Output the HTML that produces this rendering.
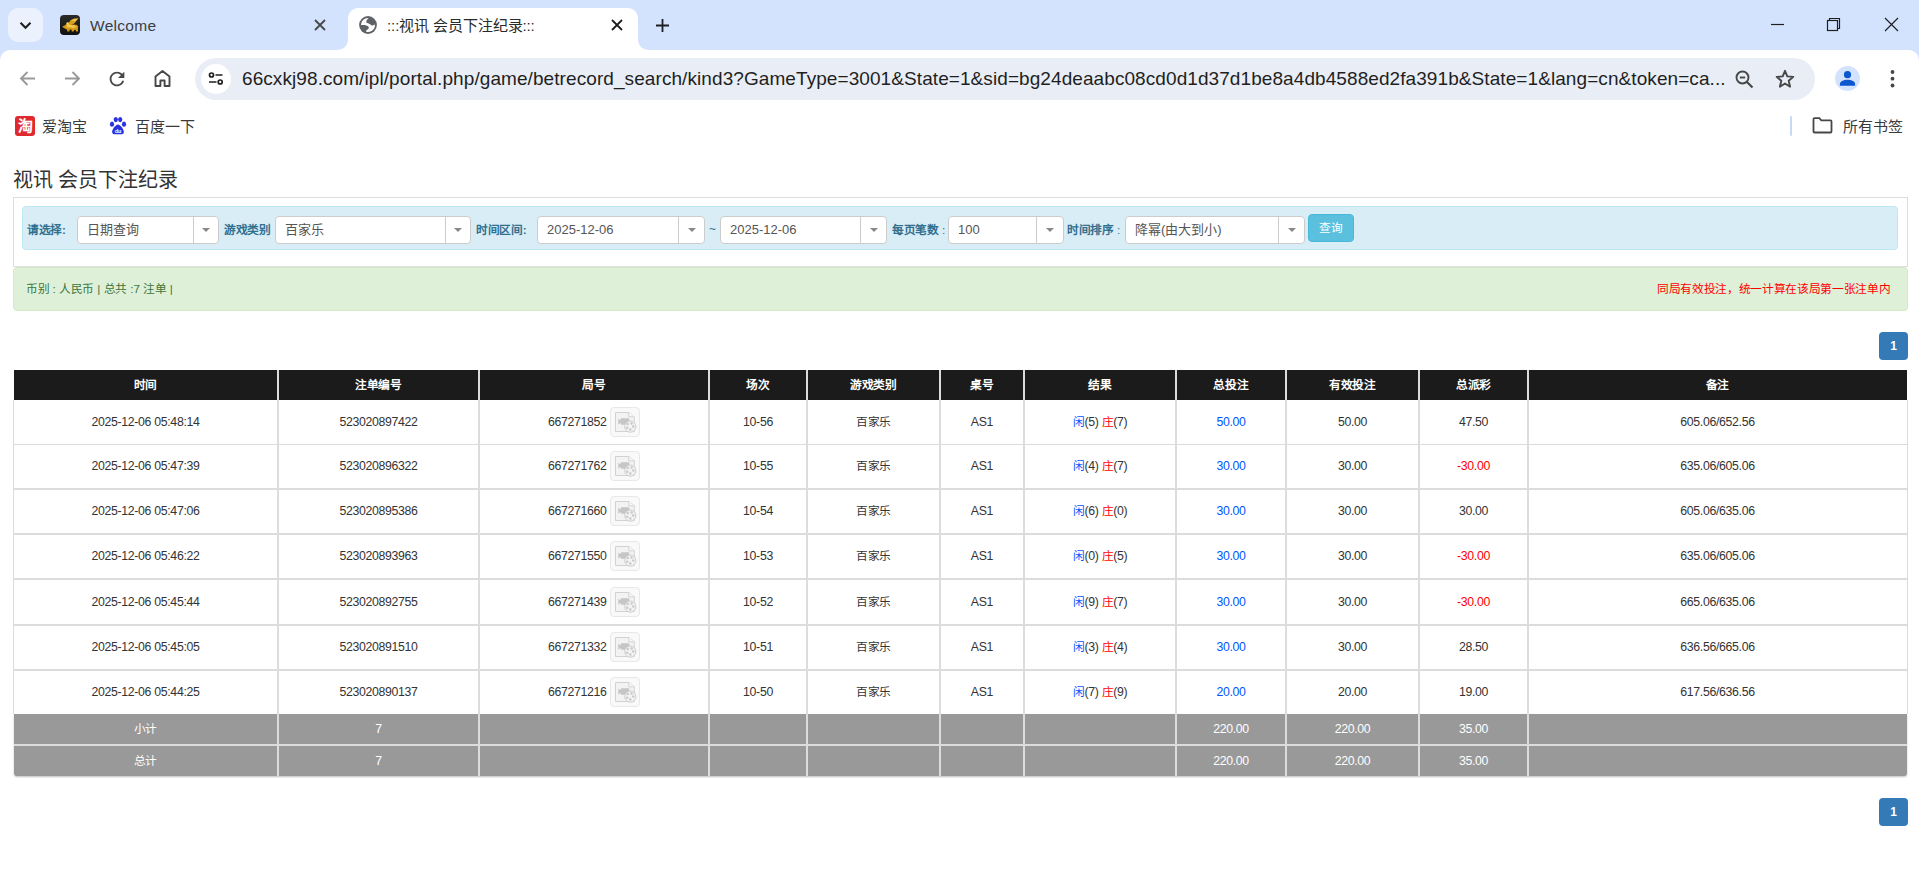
<!DOCTYPE html><html lang="zh-CN"><head><meta charset="utf-8"><title>视讯 会员下注纪录</title><style>
*{margin:0;padding:0;box-sizing:border-box}
html,body{width:1919px;height:888px;overflow:hidden;background:#fff}
body{position:relative;font-family:"Liberation Sans",sans-serif;color:#333}
.a{position:absolute}
.c{display:flex;align-items:center;justify-content:center;white-space:nowrap}
.tabbar{left:0;top:0;width:1919px;height:62px;background:#d3e3fd}
.toolbar{left:0;top:50px;width:1919px;height:95px;background:#fff;border-radius:10px 10px 0 0}
.omni{left:195px;top:58px;width:1620px;height:42px;background:#e9eef6;border-radius:21px}
.url{left:242px;top:66px;font-size:19px;letter-spacing:0.08px;color:#1f1f1f;white-space:nowrap;line-height:26px}
.bm{font-size:15px;color:#3a3a3a;white-space:nowrap;line-height:20px;margin-top:1px}
.title{left:12.5px;top:167px;font-size:20px;color:#333;line-height:26px;white-space:nowrap}
.panel{left:13px;top:197px;width:1895px;height:70px;border:1px solid #ddd;border-bottom-color:#ddd}
.info{left:22px;top:206px;width:1876px;height:44px;background:#d9edf7;border:1px solid #bce8f1;border-radius:4px}
.lbl{font-size:11.7px;font-weight:bold;color:#31708f;line-height:16px;white-space:nowrap;top:221.5px}
.sel{top:216px;height:28px;background:#fff;border:1px solid #ccc;border-radius:4px}
.sel .t{position:absolute;left:9px;top:3.5px;font-size:13px;color:#555;line-height:17px;white-space:nowrap}
.sel .d{position:absolute;top:0;bottom:0;width:1px;background:#ccc}
.sel .ar{position:absolute;top:11px;width:0;height:0;border-left:4px solid transparent;border-right:4px solid transparent;border-top:4px solid #888}
.btn{left:1308px;top:214px;width:46px;height:28px;background:#5bc0de;border:1px solid #46b8da;border-radius:4px;color:#fff;font-size:11.7px;padding-bottom:3px;letter-spacing:-0.33px}
.succ{left:13px;top:267px;width:1895px;height:44px;background:#dff0d8;border:1px solid #d6e9c6;border-radius:4px}
.st{font-size:11.7px;line-height:16px;white-space:nowrap;top:280.5px}
.pg{left:1879px;width:29px;height:28px;background:#337ab7;border-radius:4px;color:#fff;font-size:12px;font-weight:bold}
.tc{font-size:12.3px;line-height:16px;letter-spacing:-0.32px}
.hd{color:#fff;font-weight:bold}.hd2{color:#fff}
.blue{color:#0055ff}
.red{color:#ff0000}
.k{letter-spacing:-0.33px}
.tc .k{letter-spacing:-0.33px;font-size:11.7px}
.ic{width:30px;height:30px;border:1px solid #e8e8e8;border-radius:4px;background:#f9f9f9;margin-left:3.5px;position:relative;top:0px}
</style></head><body>
<div class="a tabbar"></div>
<div class="a" style="left:8px;top:8px;width:35px;height:34px;background:#ebf1fd;border-radius:10px"></div>
<svg class="a" style="left:17px;top:17px" width="17" height="17" viewBox="0 0 17 17"><path d="M3.5 5.8 L8.5 10.8 L13.5 5.8" fill="none" stroke="#1f1f1f" stroke-width="2"/></svg>
<div class="a" style="left:60px;top:15px;width:20px;height:20px;background:linear-gradient(#2a2a2a,#111);border-radius:4px;overflow:hidden"><svg width="20" height="20" viewBox="0 0 20 20"><path d="M8.5 8.2L10.5 5.2L14 3.6L18.6 3.2L16.8 5.2L15.2 7.6L13.2 9.2L10.2 9.4Z" fill="#d9a21e"/><path d="M11 5.5L14.5 4.2L17.5 3.8L15.5 5.8Z" fill="#f4cf5e"/><path d="M2.6 11.2L5.2 10.2L6.6 8.2L8.6 7.6L9.8 8.6L12.6 9.4L16.6 9.8L18.2 11.6L17.8 14.2L18 16.4L16.2 16.4L15.6 14.8L14.2 15L13.6 16.6L11.8 16.6L11.6 14.8L9.8 14.6L9.2 16.6L7.4 16.6L7 14.4L5 13.8L4 12.8L2.8 12.6Z" fill="#d49a1a"/><path d="M6.2 10.4L8.4 9L11 10L14.8 10.6L16.4 12L13.8 13L10.6 12.6L7.6 12.4Z" fill="#f2c94c"/><circle cx="7.6" cy="8.4" r="1.1" fill="#f7d86a"/></svg></div>
<div class="a" style="left:90px;top:15.5px;font-size:15.5px;letter-spacing:0.3px;color:#3c3c3c;line-height:20px;white-space:nowrap">Welcome</div>
<svg class="a" style="left:313px;top:18px" width="14" height="14" viewBox="0 0 14 14"><path d="M2 2L12 12M12 2L2 12" stroke="#474747" stroke-width="1.8"/></svg>
<div class="a" style="left:348px;top:8px;width:290px;height:42px;background:#fff;border-radius:10px 10px 0 0"></div>
<svg class="a" style="left:336px;top:38px" width="12" height="12" viewBox="0 0 12 12"><path d="M0 12 Q12 12 12 0 L12 12 Z" fill="#fff"/></svg>
<svg class="a" style="left:638px;top:38px" width="12" height="12" viewBox="0 0 12 12"><path d="M12 12 Q0 12 0 0 L0 12 Z" fill="#fff"/></svg>
<svg class="a" style="left:359px;top:16px" width="18" height="18" viewBox="0 0 18 18"><circle cx="9" cy="9" r="8.9" fill="#5f6368"/><path d="M9.7 1.95C8.2 3.2 7.0 4.8 7.3 6.6C8.6 7.4 10.6 7.6 12 8.9C13.2 9.9 15 9.3 16.1 8.6A7.1 7.1 0 0 1 7.6 15.95C6.6 14.6 7.4 13.8 8.6 13.4C9.9 12.9 10.2 11.3 9.3 10.6C8.4 9.6 6.8 9.1 5.2 9.0L1.95 8.9A7.1 7.1 0 0 1 9.7 1.95Z" fill="#fff"/></svg>
<div class="a" style="left:387px;top:16px;font-size:15px;color:#2a2a2a;line-height:20px;white-space:nowrap;letter-spacing:-0.1px">:::视讯 会员下注纪录:::</div>
<svg class="a" style="left:610px;top:18px" width="14" height="14" viewBox="0 0 14 14"><path d="M2 2L12 12M12 2L2 12" stroke="#1f1f1f" stroke-width="1.8"/></svg>
<svg class="a" style="left:655px;top:18px" width="15" height="15" viewBox="0 0 15 15"><path d="M7.5 1V14M1 7.5H14" stroke="#1f1f1f" stroke-width="1.8"/></svg>
<svg class="a" style="left:1765px;top:12px" width="26" height="26" viewBox="0 0 26 26"><path d="M6 12.5H19" stroke="#1f1f1f" stroke-width="1.2"/></svg>
<svg class="a" style="left:1821px;top:12px" width="26" height="26" viewBox="0 0 26 26"><rect x="6.5" y="8.5" width="10" height="10" fill="none" stroke="#1f1f1f" stroke-width="1.2"/><path d="M8.5 8.5V6.5H18.5V16.5H16.5" fill="none" stroke="#1f1f1f" stroke-width="1.2"/></svg>
<svg class="a" style="left:1878px;top:12px" width="26" height="26" viewBox="0 0 26 26"><path d="M7 6L20 19M20 6L7 19" stroke="#1f1f1f" stroke-width="1.2"/></svg>
<div class="a toolbar"></div>
<svg class="a" style="left:17px;top:68px" width="21" height="21" viewBox="0 0 21 21"><path d="M18 10.5H4.5M10.5 4L4 10.5L10.5 17" fill="none" stroke="#9a9a9a" stroke-width="1.9"/></svg>
<svg class="a" style="left:62px;top:68px" width="21" height="21" viewBox="0 0 21 21"><path d="M3 10.5H16.5M10.5 4L17 10.5L10.5 17" fill="none" stroke="#9a9a9a" stroke-width="1.9"/></svg>
<svg class="a" style="left:106.3px;top:67.6px" width="22" height="22" viewBox="0 0 24 24"><path d="M17.65 6.35C16.2 4.9 14.21 4 12 4c-4.42 0-7.99 3.58-7.99 8s3.57 8 7.99 8c3.73 0 6.84-2.55 7.73-6h-2.08c-.82 2.33-3.04 4-5.65 4-3.31 0-6-2.690-6-6s2.69-6 6-6c1.66 0 3.14.69 4.220 1.78L13 11h7V4l-2.35 2.35z" fill="#474747"/></svg>
<svg class="a" style="left:152px;top:68px" width="21" height="21" viewBox="0 0 21 21"><path d="M3.5 18V8.6L10.5 3L17.5 8.6V18H12.6V12.5H8.4V18Z" fill="none" stroke="#474747" stroke-width="1.9" stroke-linejoin="round"/></svg>
<div class="a omni"></div>
<div class="a" style="left:201px;top:64px;width:30px;height:30px;border-radius:15px;background:#fff"></div>
<svg class="a" style="left:206px;top:69px" width="20" height="20" viewBox="0 0 20 20"><circle cx="5.5" cy="6" r="2" fill="none" stroke="#1f1f1f" stroke-width="1.7"/><path d="M9.5 6H16.5M3 13H10.5" stroke="#1f1f1f" stroke-width="1.7"/><circle cx="14.2" cy="13" r="2" fill="none" stroke="#1f1f1f" stroke-width="1.7"/></svg>
<div class="a url">66cxkj98.com/ipl/portal.php/game/betrecord_search/kind3?GameType=3001&amp;State=1&amp;sid=bg24deaabc08cd0d1d37d1be8a4db4588ed2fa391b&amp;State=1&amp;lang=cn&amp;token=ca...</div>
<svg class="a" style="left:1734px;top:69px" width="22" height="22" viewBox="0 0 22 22"><circle cx="8.5" cy="8.5" r="6" fill="none" stroke="#474747" stroke-width="1.9"/><path d="M5.8 8.5H11.2" stroke="#474747" stroke-width="1.9"/><path d="M13 13L18.5 18.5" stroke="#474747" stroke-width="2.1"/></svg>
<svg class="a" style="left:1774px;top:68px" width="22" height="22" viewBox="0 0 22 22"><path d="M11 2.8L13.3 8.4L19.3 8.9L14.7 12.8L16.1 18.7L11 15.5L5.9 18.7L7.3 12.8L2.7 8.9L8.7 8.4Z" fill="none" stroke="#474747" stroke-width="1.9" stroke-linejoin="round"/></svg>
<div class="a" style="left:1835px;top:66px;width:25px;height:25px;border-radius:13px;background:#d3e3fd"></div>
<svg class="a" style="left:1835px;top:66px" width="25" height="25" viewBox="0 0 25 25"><circle cx="12.5" cy="8.7" r="3.6" fill="#0b57d0"/><path d="M4.9 19.8V18.2C4.9 15.4 8.4 13.8 12.5 13.8C16.6 13.8 20.1 15.4 20.1 18.2V19.8Z" fill="#0b57d0"/></svg>
<svg class="a" style="left:1886px;top:66px" width="13" height="26" viewBox="0 0 13 26"><circle cx="6.5" cy="6" r="1.9" fill="#474747"/><circle cx="6.5" cy="12.7" r="1.9" fill="#474747"/><circle cx="6.5" cy="19.5" r="1.9" fill="#474747"/></svg>
<div class="a" style="left:15px;top:116px;width:20px;height:20px;background:#e0282f;border-radius:3px;color:#fff;font-size:15px;font-weight:bold;line-height:20px;text-align:center">淘</div>
<div class="a bm" style="left:42px;top:116px">爱淘宝</div>
<svg class="a" style="left:109px;top:116px" width="18" height="20" viewBox="0 0 18 20"><ellipse cx="3" cy="8.2" rx="2.1" ry="2.6" fill="#2932e1"/><ellipse cx="6.8" cy="3.6" rx="2.1" ry="2.6" fill="#2932e1"/><ellipse cx="11.2" cy="3.6" rx="2.1" ry="2.6" fill="#2932e1"/><ellipse cx="15" cy="8.2" rx="2.1" ry="2.6" fill="#2932e1"/><path d="M9 8.5C11.5 8.5 15.5 14 14.8 16.6C14.2 19 11.4 18.2 9 18.2C6.6 18.2 3.8 19 3.2 16.6C2.5 14 6.5 8.5 9 8.5Z" fill="#2932e1"/><text x="9" y="17" font-size="5.5" fill="#fff" text-anchor="middle" font-family="Liberation Sans" font-weight="bold">du</text></svg>
<div class="a bm" style="left:135px;top:116px">百度一下</div>
<div class="a" style="left:1790px;top:116px;width:2px;height:20px;background:#c7d8f9;border-radius:1px"></div>
<svg class="a" style="left:1810px;top:115px" width="24" height="20" viewBox="0 0 24 20"><path d="M3.5 4.2C3.5 3.6 3.9 3.2 4.5 3.2H9.3L11.3 5.4H20.5C21.1 5.4 21.5 5.8 21.5 6.4V16.5C21.5 17.1 21.1 17.5 20.5 17.5H4.5C3.9 17.5 3.5 17.1 3.5 16.5Z" fill="none" stroke="#474747" stroke-width="1.8"/></svg>
<div class="a bm" style="left:1843px;top:116px">所有书签</div>
<div class="a title">视讯 会员下注纪录</div>
<div class="a panel"></div>
<div class="a info"></div>
<div class="a lbl" style="left:27px"><span class="k">请选择</span>:</div>
<div class="a sel" style="left:77px;width:142px"><span class="t">日期查询</span><span class="d" style="left:115px"></span><span class="ar" style="left:124px"></span></div>
<div class="a lbl" style="left:224px"><span class="k">游戏类别</span></div>
<div class="a sel" style="left:275px;width:196px"><span class="t">百家乐</span><span class="d" style="left:169px"></span><span class="ar" style="left:178px"></span></div>
<div class="a lbl" style="left:476px"><span class="k">时间区间</span>:</div>
<div class="a sel" style="left:537px;width:168px"><span class="t">2025-12-06</span><span class="d" style="left:140px"></span><span class="ar" style="left:150px"></span></div>
<div class="a" style="left:709px;top:221px;font-size:12px;line-height:16px;color:#31708f">~</div>
<div class="a sel" style="left:720px;width:167px"><span class="t">2025-12-06</span><span class="d" style="left:139px"></span><span class="ar" style="left:149px"></span></div>
<div class="a lbl" style="left:892px"><span class="k">每页笔数</span><span style="font-weight:normal"> :</span></div>
<div class="a sel" style="left:948px;width:116px"><span class="t">100</span><span class="d" style="left:87px"></span><span class="ar" style="left:97px"></span></div>
<div class="a lbl" style="left:1067px"><span class="k">时间排序</span><span style="font-weight:normal"> :</span></div>
<div class="a sel" style="left:1125px;width:180px"><span class="t">降幂(由大到小)</span><span class="d" style="left:152px"></span><span class="ar" style="left:162px"></span></div>
<div class="a btn c">查询</div>
<div class="a succ"></div>
<div class="a st" style="left:26px;color:#3c763d"><span class="k">币别</span> : <span class="k">人民币</span> | <span class="k">总共</span> :7 <span class="k">注单</span> |</div>
<div class="a st" style="left:1657px;color:#ff0000"><span class="k">同局有效投注，统一计算在该局第一张注单内</span></div>
<div class="a pg c" style="top:332px">1</div>
<div class="a pg c" style="top:798px">1</div>
<div class="a" style="left:14px;top:370px;width:1893px;height:30px;background:#1b1b1b"></div>
<div class="a" style="left:13px;top:400px;width:1895px;height:314px;background:#fff;border-left:1px solid #dcdcdc;border-right:1px solid #dcdcdc"></div>
<div class="a" style="left:13px;top:444px;width:1895px;height:1px;background:#dcdcdc"></div>
<div class="a" style="left:13px;top:488px;width:1895px;height:2px;background:#dcdcdc"></div>
<div class="a" style="left:13px;top:533px;width:1895px;height:2px;background:#dcdcdc"></div>
<div class="a" style="left:13px;top:578px;width:1895px;height:2px;background:#dcdcdc"></div>
<div class="a" style="left:13px;top:624px;width:1895px;height:2px;background:#dcdcdc"></div>
<div class="a" style="left:13px;top:669px;width:1895px;height:2px;background:#dcdcdc"></div>
<div class="a" style="left:14px;top:714px;width:1893px;height:62px;background:#999;border-radius:0 0 3px 3px;box-shadow:0 1px 2px rgba(0,0,0,.25)"></div>
<div class="a" style="left:14px;top:744px;width:1893px;height:2px;background:#dcdcdc"></div>
<div class="a" style="left:277px;top:370px;width:2px;height:406px;background:#dcdcdc"></div>
<div class="a" style="left:478px;top:370px;width:2px;height:406px;background:#dcdcdc"></div>
<div class="a" style="left:708px;top:370px;width:2px;height:406px;background:#dcdcdc"></div>
<div class="a" style="left:806px;top:370px;width:2px;height:406px;background:#dcdcdc"></div>
<div class="a" style="left:939px;top:370px;width:2px;height:406px;background:#dcdcdc"></div>
<div class="a" style="left:1023px;top:370px;width:2px;height:406px;background:#dcdcdc"></div>
<div class="a" style="left:1175px;top:370px;width:2px;height:406px;background:#dcdcdc"></div>
<div class="a" style="left:1285px;top:370px;width:2px;height:406px;background:#dcdcdc"></div>
<div class="a" style="left:1418px;top:370px;width:2px;height:406px;background:#dcdcdc"></div>
<div class="a" style="left:1527px;top:370px;width:2px;height:406px;background:#dcdcdc"></div>
<div class="a c tc hd" style="left:14px;top:370px;width:263px;height:29px"><span style="display:inline-flex;align-items:center;white-space:pre"><span class="k">时间</span></span></div>
<div class="a c tc hd" style="left:279px;top:370px;width:199px;height:29px"><span style="display:inline-flex;align-items:center;white-space:pre"><span class="k">注单编号</span></span></div>
<div class="a c tc hd" style="left:480px;top:370px;width:228px;height:29px"><span style="display:inline-flex;align-items:center;white-space:pre"><span class="k">局号</span></span></div>
<div class="a c tc hd" style="left:710px;top:370px;width:96px;height:29px"><span style="display:inline-flex;align-items:center;white-space:pre"><span class="k">场次</span></span></div>
<div class="a c tc hd" style="left:808px;top:370px;width:131px;height:29px"><span style="display:inline-flex;align-items:center;white-space:pre"><span class="k">游戏类别</span></span></div>
<div class="a c tc hd" style="left:941px;top:370px;width:82px;height:29px"><span style="display:inline-flex;align-items:center;white-space:pre"><span class="k">桌号</span></span></div>
<div class="a c tc hd" style="left:1025px;top:370px;width:150px;height:29px"><span style="display:inline-flex;align-items:center;white-space:pre"><span class="k">结果</span></span></div>
<div class="a c tc hd" style="left:1177px;top:370px;width:108px;height:29px"><span style="display:inline-flex;align-items:center;white-space:pre"><span class="k">总投注</span></span></div>
<div class="a c tc hd" style="left:1287px;top:370px;width:131px;height:29px"><span style="display:inline-flex;align-items:center;white-space:pre"><span class="k">有效投注</span></span></div>
<div class="a c tc hd" style="left:1420px;top:370px;width:107px;height:29px"><span style="display:inline-flex;align-items:center;white-space:pre"><span class="k">总派彩</span></span></div>
<div class="a c tc hd" style="left:1529px;top:370px;width:377px;height:29px"><span style="display:inline-flex;align-items:center;white-space:pre"><span class="k">备注</span></span></div>
<div class="a c tc " style="left:14px;top:407px;width:263px;height:30px"><span style="display:inline-flex;align-items:center;white-space:pre">2025-12-06 05:48:14</span></div>
<div class="a c tc " style="left:279px;top:407px;width:199px;height:30px"><span style="display:inline-flex;align-items:center;white-space:pre">523020897422</span></div>
<div class="a c tc " style="left:480px;top:407px;width:228px;height:30px"><span style="display:inline-flex;align-items:center;white-space:pre">667271852<span class="ic"><svg class="a" style="left:-1px;top:-1px" width="30" height="30" viewBox="0 0 30 30"><path d="M5.5 5.5H18.8L24.3 9.8V24.5H5.5Z" fill="#f3f3f3" stroke="#d2d2d2" stroke-width="1"/><path d="M18.8 5.5V9.8H24.3" fill="#fafafa" stroke="#d2d2d2" stroke-width="1"/><path d="M8.3 11.8L10.9 13.2V11.3H19.2V17.8H10.9V16L8.3 17.4Z" fill="#c6c6c6"/><circle cx="20.3" cy="19.6" r="5.6" fill="#f3f3f3" stroke="#cdcdcd" stroke-width="1"/><circle cx="17.7" cy="17.1" r="1.25" fill="#c9c9c9"/><circle cx="21.6" cy="16.6" r="1.25" fill="#c9c9c9"/><circle cx="23.3" cy="19.6" r="1.25" fill="#c9c9c9"/><circle cx="20.3" cy="22.6" r="1.25" fill="#c9c9c9"/><circle cx="17.2" cy="20.8" r="1.25" fill="#c9c9c9"/></svg></span></span></div>
<div class="a c tc " style="left:710px;top:407px;width:96px;height:30px"><span style="display:inline-flex;align-items:center;white-space:pre">10-56</span></div>
<div class="a c tc " style="left:808px;top:407px;width:131px;height:30px"><span style="display:inline-flex;align-items:center;white-space:pre"><span class="k">百家乐</span></span></div>
<div class="a c tc " style="left:941px;top:407px;width:82px;height:30px"><span style="display:inline-flex;align-items:center;white-space:pre">AS1</span></div>
<div class="a c tc " style="left:1025px;top:407px;width:150px;height:30px"><span style="display:inline-flex;align-items:center;white-space:pre"><span class="blue k">闲</span>(5) <span class="red k">庄</span>(7)</span></div>
<div class="a c tc " style="left:1177px;top:407px;width:108px;height:30px"><span style="display:inline-flex;align-items:center;white-space:pre"><span class="blue">50.00</span></span></div>
<div class="a c tc " style="left:1287px;top:407px;width:131px;height:30px"><span style="display:inline-flex;align-items:center;white-space:pre">50.00</span></div>
<div class="a c tc " style="left:1420px;top:407px;width:107px;height:30px"><span style="display:inline-flex;align-items:center;white-space:pre">47.50</span></div>
<div class="a c tc " style="left:1529px;top:407px;width:377px;height:30px"><span style="display:inline-flex;align-items:center;white-space:pre">605.06/652.56</span></div>
<div class="a c tc " style="left:14px;top:451px;width:263px;height:30px"><span style="display:inline-flex;align-items:center;white-space:pre">2025-12-06 05:47:39</span></div>
<div class="a c tc " style="left:279px;top:451px;width:199px;height:30px"><span style="display:inline-flex;align-items:center;white-space:pre">523020896322</span></div>
<div class="a c tc " style="left:480px;top:451px;width:228px;height:30px"><span style="display:inline-flex;align-items:center;white-space:pre">667271762<span class="ic"><svg class="a" style="left:-1px;top:-1px" width="30" height="30" viewBox="0 0 30 30"><path d="M5.5 5.5H18.8L24.3 9.8V24.5H5.5Z" fill="#f3f3f3" stroke="#d2d2d2" stroke-width="1"/><path d="M18.8 5.5V9.8H24.3" fill="#fafafa" stroke="#d2d2d2" stroke-width="1"/><path d="M8.3 11.8L10.9 13.2V11.3H19.2V17.8H10.9V16L8.3 17.4Z" fill="#c6c6c6"/><circle cx="20.3" cy="19.6" r="5.6" fill="#f3f3f3" stroke="#cdcdcd" stroke-width="1"/><circle cx="17.7" cy="17.1" r="1.25" fill="#c9c9c9"/><circle cx="21.6" cy="16.6" r="1.25" fill="#c9c9c9"/><circle cx="23.3" cy="19.6" r="1.25" fill="#c9c9c9"/><circle cx="20.3" cy="22.6" r="1.25" fill="#c9c9c9"/><circle cx="17.2" cy="20.8" r="1.25" fill="#c9c9c9"/></svg></span></span></div>
<div class="a c tc " style="left:710px;top:451px;width:96px;height:30px"><span style="display:inline-flex;align-items:center;white-space:pre">10-55</span></div>
<div class="a c tc " style="left:808px;top:451px;width:131px;height:30px"><span style="display:inline-flex;align-items:center;white-space:pre"><span class="k">百家乐</span></span></div>
<div class="a c tc " style="left:941px;top:451px;width:82px;height:30px"><span style="display:inline-flex;align-items:center;white-space:pre">AS1</span></div>
<div class="a c tc " style="left:1025px;top:451px;width:150px;height:30px"><span style="display:inline-flex;align-items:center;white-space:pre"><span class="blue k">闲</span>(4) <span class="red k">庄</span>(7)</span></div>
<div class="a c tc " style="left:1177px;top:451px;width:108px;height:30px"><span style="display:inline-flex;align-items:center;white-space:pre"><span class="blue">30.00</span></span></div>
<div class="a c tc " style="left:1287px;top:451px;width:131px;height:30px"><span style="display:inline-flex;align-items:center;white-space:pre">30.00</span></div>
<div class="a c tc " style="left:1420px;top:451px;width:107px;height:30px"><span style="display:inline-flex;align-items:center;white-space:pre"><span class="red">-30.00</span></span></div>
<div class="a c tc " style="left:1529px;top:451px;width:377px;height:30px"><span style="display:inline-flex;align-items:center;white-space:pre">635.06/605.06</span></div>
<div class="a c tc " style="left:14px;top:496px;width:263px;height:30px"><span style="display:inline-flex;align-items:center;white-space:pre">2025-12-06 05:47:06</span></div>
<div class="a c tc " style="left:279px;top:496px;width:199px;height:30px"><span style="display:inline-flex;align-items:center;white-space:pre">523020895386</span></div>
<div class="a c tc " style="left:480px;top:496px;width:228px;height:30px"><span style="display:inline-flex;align-items:center;white-space:pre">667271660<span class="ic"><svg class="a" style="left:-1px;top:-1px" width="30" height="30" viewBox="0 0 30 30"><path d="M5.5 5.5H18.8L24.3 9.8V24.5H5.5Z" fill="#f3f3f3" stroke="#d2d2d2" stroke-width="1"/><path d="M18.8 5.5V9.8H24.3" fill="#fafafa" stroke="#d2d2d2" stroke-width="1"/><path d="M8.3 11.8L10.9 13.2V11.3H19.2V17.8H10.9V16L8.3 17.4Z" fill="#c6c6c6"/><circle cx="20.3" cy="19.6" r="5.6" fill="#f3f3f3" stroke="#cdcdcd" stroke-width="1"/><circle cx="17.7" cy="17.1" r="1.25" fill="#c9c9c9"/><circle cx="21.6" cy="16.6" r="1.25" fill="#c9c9c9"/><circle cx="23.3" cy="19.6" r="1.25" fill="#c9c9c9"/><circle cx="20.3" cy="22.6" r="1.25" fill="#c9c9c9"/><circle cx="17.2" cy="20.8" r="1.25" fill="#c9c9c9"/></svg></span></span></div>
<div class="a c tc " style="left:710px;top:496px;width:96px;height:30px"><span style="display:inline-flex;align-items:center;white-space:pre">10-54</span></div>
<div class="a c tc " style="left:808px;top:496px;width:131px;height:30px"><span style="display:inline-flex;align-items:center;white-space:pre"><span class="k">百家乐</span></span></div>
<div class="a c tc " style="left:941px;top:496px;width:82px;height:30px"><span style="display:inline-flex;align-items:center;white-space:pre">AS1</span></div>
<div class="a c tc " style="left:1025px;top:496px;width:150px;height:30px"><span style="display:inline-flex;align-items:center;white-space:pre"><span class="blue k">闲</span>(6) <span class="red k">庄</span>(0)</span></div>
<div class="a c tc " style="left:1177px;top:496px;width:108px;height:30px"><span style="display:inline-flex;align-items:center;white-space:pre"><span class="blue">30.00</span></span></div>
<div class="a c tc " style="left:1287px;top:496px;width:131px;height:30px"><span style="display:inline-flex;align-items:center;white-space:pre">30.00</span></div>
<div class="a c tc " style="left:1420px;top:496px;width:107px;height:30px"><span style="display:inline-flex;align-items:center;white-space:pre">30.00</span></div>
<div class="a c tc " style="left:1529px;top:496px;width:377px;height:30px"><span style="display:inline-flex;align-items:center;white-space:pre">605.06/635.06</span></div>
<div class="a c tc " style="left:14px;top:541px;width:263px;height:30px"><span style="display:inline-flex;align-items:center;white-space:pre">2025-12-06 05:46:22</span></div>
<div class="a c tc " style="left:279px;top:541px;width:199px;height:30px"><span style="display:inline-flex;align-items:center;white-space:pre">523020893963</span></div>
<div class="a c tc " style="left:480px;top:541px;width:228px;height:30px"><span style="display:inline-flex;align-items:center;white-space:pre">667271550<span class="ic"><svg class="a" style="left:-1px;top:-1px" width="30" height="30" viewBox="0 0 30 30"><path d="M5.5 5.5H18.8L24.3 9.8V24.5H5.5Z" fill="#f3f3f3" stroke="#d2d2d2" stroke-width="1"/><path d="M18.8 5.5V9.8H24.3" fill="#fafafa" stroke="#d2d2d2" stroke-width="1"/><path d="M8.3 11.8L10.9 13.2V11.3H19.2V17.8H10.9V16L8.3 17.4Z" fill="#c6c6c6"/><circle cx="20.3" cy="19.6" r="5.6" fill="#f3f3f3" stroke="#cdcdcd" stroke-width="1"/><circle cx="17.7" cy="17.1" r="1.25" fill="#c9c9c9"/><circle cx="21.6" cy="16.6" r="1.25" fill="#c9c9c9"/><circle cx="23.3" cy="19.6" r="1.25" fill="#c9c9c9"/><circle cx="20.3" cy="22.6" r="1.25" fill="#c9c9c9"/><circle cx="17.2" cy="20.8" r="1.25" fill="#c9c9c9"/></svg></span></span></div>
<div class="a c tc " style="left:710px;top:541px;width:96px;height:30px"><span style="display:inline-flex;align-items:center;white-space:pre">10-53</span></div>
<div class="a c tc " style="left:808px;top:541px;width:131px;height:30px"><span style="display:inline-flex;align-items:center;white-space:pre"><span class="k">百家乐</span></span></div>
<div class="a c tc " style="left:941px;top:541px;width:82px;height:30px"><span style="display:inline-flex;align-items:center;white-space:pre">AS1</span></div>
<div class="a c tc " style="left:1025px;top:541px;width:150px;height:30px"><span style="display:inline-flex;align-items:center;white-space:pre"><span class="blue k">闲</span>(0) <span class="red k">庄</span>(5)</span></div>
<div class="a c tc " style="left:1177px;top:541px;width:108px;height:30px"><span style="display:inline-flex;align-items:center;white-space:pre"><span class="blue">30.00</span></span></div>
<div class="a c tc " style="left:1287px;top:541px;width:131px;height:30px"><span style="display:inline-flex;align-items:center;white-space:pre">30.00</span></div>
<div class="a c tc " style="left:1420px;top:541px;width:107px;height:30px"><span style="display:inline-flex;align-items:center;white-space:pre"><span class="red">-30.00</span></span></div>
<div class="a c tc " style="left:1529px;top:541px;width:377px;height:30px"><span style="display:inline-flex;align-items:center;white-space:pre">635.06/605.06</span></div>
<div class="a c tc " style="left:14px;top:587px;width:263px;height:30px"><span style="display:inline-flex;align-items:center;white-space:pre">2025-12-06 05:45:44</span></div>
<div class="a c tc " style="left:279px;top:587px;width:199px;height:30px"><span style="display:inline-flex;align-items:center;white-space:pre">523020892755</span></div>
<div class="a c tc " style="left:480px;top:587px;width:228px;height:30px"><span style="display:inline-flex;align-items:center;white-space:pre">667271439<span class="ic"><svg class="a" style="left:-1px;top:-1px" width="30" height="30" viewBox="0 0 30 30"><path d="M5.5 5.5H18.8L24.3 9.8V24.5H5.5Z" fill="#f3f3f3" stroke="#d2d2d2" stroke-width="1"/><path d="M18.8 5.5V9.8H24.3" fill="#fafafa" stroke="#d2d2d2" stroke-width="1"/><path d="M8.3 11.8L10.9 13.2V11.3H19.2V17.8H10.9V16L8.3 17.4Z" fill="#c6c6c6"/><circle cx="20.3" cy="19.6" r="5.6" fill="#f3f3f3" stroke="#cdcdcd" stroke-width="1"/><circle cx="17.7" cy="17.1" r="1.25" fill="#c9c9c9"/><circle cx="21.6" cy="16.6" r="1.25" fill="#c9c9c9"/><circle cx="23.3" cy="19.6" r="1.25" fill="#c9c9c9"/><circle cx="20.3" cy="22.6" r="1.25" fill="#c9c9c9"/><circle cx="17.2" cy="20.8" r="1.25" fill="#c9c9c9"/></svg></span></span></div>
<div class="a c tc " style="left:710px;top:587px;width:96px;height:30px"><span style="display:inline-flex;align-items:center;white-space:pre">10-52</span></div>
<div class="a c tc " style="left:808px;top:587px;width:131px;height:30px"><span style="display:inline-flex;align-items:center;white-space:pre"><span class="k">百家乐</span></span></div>
<div class="a c tc " style="left:941px;top:587px;width:82px;height:30px"><span style="display:inline-flex;align-items:center;white-space:pre">AS1</span></div>
<div class="a c tc " style="left:1025px;top:587px;width:150px;height:30px"><span style="display:inline-flex;align-items:center;white-space:pre"><span class="blue k">闲</span>(9) <span class="red k">庄</span>(7)</span></div>
<div class="a c tc " style="left:1177px;top:587px;width:108px;height:30px"><span style="display:inline-flex;align-items:center;white-space:pre"><span class="blue">30.00</span></span></div>
<div class="a c tc " style="left:1287px;top:587px;width:131px;height:30px"><span style="display:inline-flex;align-items:center;white-space:pre">30.00</span></div>
<div class="a c tc " style="left:1420px;top:587px;width:107px;height:30px"><span style="display:inline-flex;align-items:center;white-space:pre"><span class="red">-30.00</span></span></div>
<div class="a c tc " style="left:1529px;top:587px;width:377px;height:30px"><span style="display:inline-flex;align-items:center;white-space:pre">665.06/635.06</span></div>
<div class="a c tc " style="left:14px;top:632px;width:263px;height:30px"><span style="display:inline-flex;align-items:center;white-space:pre">2025-12-06 05:45:05</span></div>
<div class="a c tc " style="left:279px;top:632px;width:199px;height:30px"><span style="display:inline-flex;align-items:center;white-space:pre">523020891510</span></div>
<div class="a c tc " style="left:480px;top:632px;width:228px;height:30px"><span style="display:inline-flex;align-items:center;white-space:pre">667271332<span class="ic"><svg class="a" style="left:-1px;top:-1px" width="30" height="30" viewBox="0 0 30 30"><path d="M5.5 5.5H18.8L24.3 9.8V24.5H5.5Z" fill="#f3f3f3" stroke="#d2d2d2" stroke-width="1"/><path d="M18.8 5.5V9.8H24.3" fill="#fafafa" stroke="#d2d2d2" stroke-width="1"/><path d="M8.3 11.8L10.9 13.2V11.3H19.2V17.8H10.9V16L8.3 17.4Z" fill="#c6c6c6"/><circle cx="20.3" cy="19.6" r="5.6" fill="#f3f3f3" stroke="#cdcdcd" stroke-width="1"/><circle cx="17.7" cy="17.1" r="1.25" fill="#c9c9c9"/><circle cx="21.6" cy="16.6" r="1.25" fill="#c9c9c9"/><circle cx="23.3" cy="19.6" r="1.25" fill="#c9c9c9"/><circle cx="20.3" cy="22.6" r="1.25" fill="#c9c9c9"/><circle cx="17.2" cy="20.8" r="1.25" fill="#c9c9c9"/></svg></span></span></div>
<div class="a c tc " style="left:710px;top:632px;width:96px;height:30px"><span style="display:inline-flex;align-items:center;white-space:pre">10-51</span></div>
<div class="a c tc " style="left:808px;top:632px;width:131px;height:30px"><span style="display:inline-flex;align-items:center;white-space:pre"><span class="k">百家乐</span></span></div>
<div class="a c tc " style="left:941px;top:632px;width:82px;height:30px"><span style="display:inline-flex;align-items:center;white-space:pre">AS1</span></div>
<div class="a c tc " style="left:1025px;top:632px;width:150px;height:30px"><span style="display:inline-flex;align-items:center;white-space:pre"><span class="blue k">闲</span>(3) <span class="red k">庄</span>(4)</span></div>
<div class="a c tc " style="left:1177px;top:632px;width:108px;height:30px"><span style="display:inline-flex;align-items:center;white-space:pre"><span class="blue">30.00</span></span></div>
<div class="a c tc " style="left:1287px;top:632px;width:131px;height:30px"><span style="display:inline-flex;align-items:center;white-space:pre">30.00</span></div>
<div class="a c tc " style="left:1420px;top:632px;width:107px;height:30px"><span style="display:inline-flex;align-items:center;white-space:pre">28.50</span></div>
<div class="a c tc " style="left:1529px;top:632px;width:377px;height:30px"><span style="display:inline-flex;align-items:center;white-space:pre">636.56/665.06</span></div>
<div class="a c tc " style="left:14px;top:677px;width:263px;height:30px"><span style="display:inline-flex;align-items:center;white-space:pre">2025-12-06 05:44:25</span></div>
<div class="a c tc " style="left:279px;top:677px;width:199px;height:30px"><span style="display:inline-flex;align-items:center;white-space:pre">523020890137</span></div>
<div class="a c tc " style="left:480px;top:677px;width:228px;height:30px"><span style="display:inline-flex;align-items:center;white-space:pre">667271216<span class="ic"><svg class="a" style="left:-1px;top:-1px" width="30" height="30" viewBox="0 0 30 30"><path d="M5.5 5.5H18.8L24.3 9.8V24.5H5.5Z" fill="#f3f3f3" stroke="#d2d2d2" stroke-width="1"/><path d="M18.8 5.5V9.8H24.3" fill="#fafafa" stroke="#d2d2d2" stroke-width="1"/><path d="M8.3 11.8L10.9 13.2V11.3H19.2V17.8H10.9V16L8.3 17.4Z" fill="#c6c6c6"/><circle cx="20.3" cy="19.6" r="5.6" fill="#f3f3f3" stroke="#cdcdcd" stroke-width="1"/><circle cx="17.7" cy="17.1" r="1.25" fill="#c9c9c9"/><circle cx="21.6" cy="16.6" r="1.25" fill="#c9c9c9"/><circle cx="23.3" cy="19.6" r="1.25" fill="#c9c9c9"/><circle cx="20.3" cy="22.6" r="1.25" fill="#c9c9c9"/><circle cx="17.2" cy="20.8" r="1.25" fill="#c9c9c9"/></svg></span></span></div>
<div class="a c tc " style="left:710px;top:677px;width:96px;height:30px"><span style="display:inline-flex;align-items:center;white-space:pre">10-50</span></div>
<div class="a c tc " style="left:808px;top:677px;width:131px;height:30px"><span style="display:inline-flex;align-items:center;white-space:pre"><span class="k">百家乐</span></span></div>
<div class="a c tc " style="left:941px;top:677px;width:82px;height:30px"><span style="display:inline-flex;align-items:center;white-space:pre">AS1</span></div>
<div class="a c tc " style="left:1025px;top:677px;width:150px;height:30px"><span style="display:inline-flex;align-items:center;white-space:pre"><span class="blue k">闲</span>(7) <span class="red k">庄</span>(9)</span></div>
<div class="a c tc " style="left:1177px;top:677px;width:108px;height:30px"><span style="display:inline-flex;align-items:center;white-space:pre"><span class="blue">20.00</span></span></div>
<div class="a c tc " style="left:1287px;top:677px;width:131px;height:30px"><span style="display:inline-flex;align-items:center;white-space:pre">20.00</span></div>
<div class="a c tc " style="left:1420px;top:677px;width:107px;height:30px"><span style="display:inline-flex;align-items:center;white-space:pre">19.00</span></div>
<div class="a c tc " style="left:1529px;top:677px;width:377px;height:30px"><span style="display:inline-flex;align-items:center;white-space:pre">617.56/636.56</span></div>
<div class="a c tc hd2" style="left:14px;top:714px;width:263px;height:30px"><span style="display:inline-flex;align-items:center;white-space:pre"><span class="k">小计</span></span></div>
<div class="a c tc hd2" style="left:279px;top:714px;width:199px;height:30px"><span style="display:inline-flex;align-items:center;white-space:pre">7</span></div>
<div class="a c tc hd2" style="left:1177px;top:714px;width:108px;height:30px"><span style="display:inline-flex;align-items:center;white-space:pre">220.00</span></div>
<div class="a c tc hd2" style="left:1287px;top:714px;width:131px;height:30px"><span style="display:inline-flex;align-items:center;white-space:pre">220.00</span></div>
<div class="a c tc hd2" style="left:1420px;top:714px;width:107px;height:30px"><span style="display:inline-flex;align-items:center;white-space:pre">35.00</span></div>
<div class="a c tc hd2" style="left:14px;top:746px;width:263px;height:30px"><span style="display:inline-flex;align-items:center;white-space:pre"><span class="k">总计</span></span></div>
<div class="a c tc hd2" style="left:279px;top:746px;width:199px;height:30px"><span style="display:inline-flex;align-items:center;white-space:pre">7</span></div>
<div class="a c tc hd2" style="left:1177px;top:746px;width:108px;height:30px"><span style="display:inline-flex;align-items:center;white-space:pre">220.00</span></div>
<div class="a c tc hd2" style="left:1287px;top:746px;width:131px;height:30px"><span style="display:inline-flex;align-items:center;white-space:pre">220.00</span></div>
<div class="a c tc hd2" style="left:1420px;top:746px;width:107px;height:30px"><span style="display:inline-flex;align-items:center;white-space:pre">35.00</span></div>
</body></html>
